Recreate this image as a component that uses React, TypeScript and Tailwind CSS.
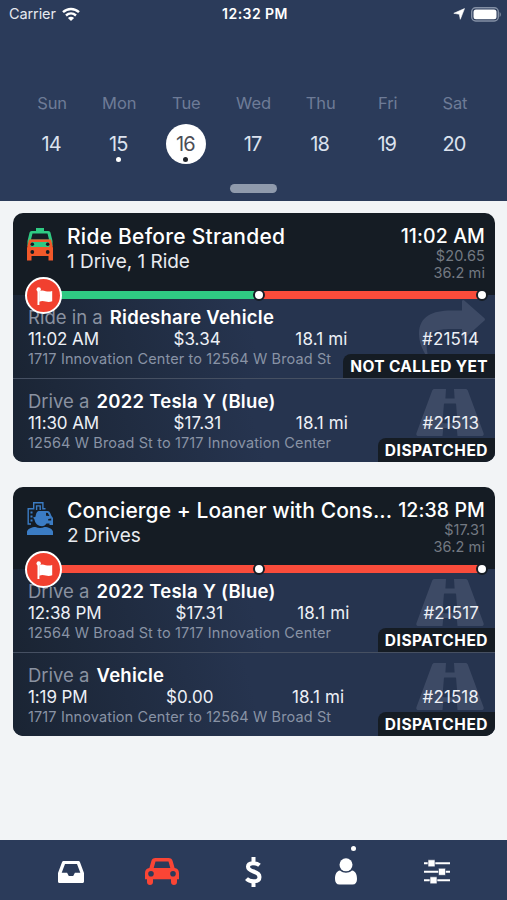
import type { ReactNode } from "react";
import clsx from "clsx";

type Leg = {
  prefix: string;
  vehicle: string;
  time: string;
  price: string;
  distance: string;
  id: string;
  address: string;
  status: string;
  kind: "ride" | "drive";
};

type Trip = {
  title: string;
  titleClass: string;
  subtitle: string;
  time: string;
  price: string;
  distance: string;
  icon: ReactNode;
  firstLeg: string;
  legs: Leg[];
};

const days = [
  { name: "Sun", date: 14 },
  { name: "Mon", date: 15, dot: true },
  { name: "Tue", date: 16, dot: true, selected: true },
  { name: "Wed", date: 17 },
  { name: "Thu", date: 18 },
  { name: "Fri", date: 19 },
  { name: "Sat", date: 20 },
];

const trips: Trip[] = [
  {
    title: "Ride Before Stranded",
    titleClass: "tracking-[0.25px]",
    subtitle: "1 Drive, 1 Ride",
    time: "11:02 AM",
    price: "$20.65",
    distance: "36.2 mi",
    icon: <TaxiIcon />,
    firstLeg: "bg-[#2fca83]",
    legs: [
      {
        prefix: "Ride in a",
        vehicle: "Rideshare Vehicle",
        time: "11:02 AM",
        price: "$3.34",
        distance: "18.1 mi",
        id: "#21514",
        address: "1717 Innovation Center to 12564 W Broad St",
        status: "NOT CALLED YET",
        kind: "ride",
      },
      {
        prefix: "Drive a",
        vehicle: "2022 Tesla Y (Blue)",
        time: "11:30 AM",
        price: "$17.31",
        distance: "18.1 mi",
        id: "#21513",
        address: "12564 W Broad St to 1717 Innovation Center",
        status: "DISPATCHED",
        kind: "drive",
      },
    ],
  },
  {
    title: "Concierge + Loaner with Cons...",
    titleClass: "tracking-[0.06px]",
    subtitle: "2 Drives",
    time: "12:38 PM",
    price: "$17.31",
    distance: "36.2 mi",
    icon: <ConciergeIcon />,
    firstLeg: "bg-[#f94c3b]",
    legs: [
      {
        prefix: "Drive a",
        vehicle: "2022 Tesla Y (Blue)",
        time: "12:38 PM",
        price: "$17.31",
        distance: "18.1 mi",
        id: "#21517",
        address: "12564 W Broad St to 1717 Innovation Center",
        status: "DISPATCHED",
        kind: "drive",
      },
      {
        prefix: "Drive a",
        vehicle: "Vehicle",
        time: "1:19 PM",
        price: "$0.00",
        distance: "18.1 mi",
        id: "#21518",
        address: "1717 Innovation Center to 12564 W Broad St",
        status: "DISPATCHED",
        kind: "drive",
      },
    ],
  },
];

function TaxiIcon() {
  return (
    <svg viewBox="0 0 26 33" className="h-[33px] w-[26px]">
      <path
        fill="#2fca83"
        fillRule="evenodd"
        d="M9 0h8v3h4.200c1.300 0 2 .7 2.300 1.800L25.500 13v5H.5v-5l2-8.200C2.800 3.700 3.500 3 4.800 3H9zM5.500 5.500 4 11.500h18l-1.500-6z"
      />
      <path fill="#f2592a" d="M2 11.500h22l2 8.500v12.500h-4.500V28h-17v4.500H0V20z" />
      <path fill="#2fca83" d="M4.500 14h17l1 5h-19z" />
      <g fill="#151c24">
        <circle cx="5.300" cy="16.200" r="1.800" />
        <circle cx="20.700" cy="16.200" r="1.800" />
        <circle cx="5.300" cy="24" r="1.900" />
        <circle cx="20.700" cy="24" r="1.900" />
      </g>
    </svg>
  );
}

function ConciergeIcon() {
  return (
    <svg viewBox="0 0 26 33" className="h-[33px] w-[26px]">
      <path
        fill="none"
        stroke="#3b7cc4"
        strokeWidth="1.400"
        d="M4 22H1.200V6.700h5.500V.8h9.200v5.900h2.600M9.600 8V3.900h3.600V8"
      />
      <path fill="#3b7cc4" d="M3.500 9.500h2v2h-2zM3.500 13.500h2v2h-2zM3.500 17.500h2v2h-2z" />
      <path
        fill="#3b7cc4"
        d="M11.500 9h9c1.300 0 2.200.7 2.700 2l1.300 3 1.500 2v7h-3.500v-1.500h-3C18.500 23.500 16 24.500 13.500 24 10.500 23.500 8 21 7.500 17.500L6 15.500l2.500-.8C9 12 9.500 9.500 11.500 9z"
      />
      <path fill="#151c24" d="m19 10.800 1.900.1 1.500 3.200-3.400-.4zM21.200 17l3-.5v2h-3z" />
      <path fill="#3b7cc4" d="M0 33v-3.500C1 26.500 5 25 8.500 25c2.500 1.200 6.500 1.200 9 0 4 0 7.500 1.500 8.500 4.500V33z" />
    </svg>
  );
}

function FlagIcon() {
  return (
    <svg viewBox="-10 -10 20 20" className="h-5 w-5" fill="white">
      <circle cx="-5.300" cy="-6.600" r="2.200" />
      <path d="M-6.500-6h1.900V9h-1.900z" />
      <path d="M-4.800-4.800c2.400-1 4.300-.6 6.500 0 2.200.6 4.200.5 6.500-.3v10.300c-2.300.9-4.300.9-6.500.3-2.200-.6-4.100-.8-6.500.2z" />
    </svg>
  );
}

function ShareMark() {
  return (
    <svg viewBox="0 0 66 57" className="h-[57px] w-[66px]" fill="currentColor">
      <path d="M43 1.500c0-1.500 1.200-2 2.300-1L65.200 18c1 .9 1 1.900 0 2.800L45.300 38.500c-1.100 1-2.300.4-2.300-1V29H32C18 29 8 32 7.500 44c-.1 4 .5 8 1.500 12 .2 1-1 1.300-1.500.4C3 49 0 41.500 0 34 0 16 14 10.500 32 10.500h11z" />
    </svg>
  );
}

function RoadMark() {
  return (
    <svg viewBox="0 0 68 47" className="h-[47px] w-[68px]" fill="currentColor">
      <path
        fillRule="evenodd"
        d="M18.500 0H30l-.6 9.500h9.200L38 0h11.500c1.200 0 1.800.5 2.300 1.600L67.500 44c.6 1.800 0 3-2 3H41.500l-.8-8H27.300l-.8 8H2.500c-2 0-2.600-1.200-2-3L16.200 1.600C16.700.5 17.300 0 18.500 0zM28.900 14.500c-.6 0-1 .4-1 1L26.500 33c0 .7.400 1.200 1 1.200h13c.6 0 1-.5 1-1.200l-1.400-17.500c0-.6-.4-1-1-1z"
      />
    </svg>
  );
}

function StatusBar() {
  return (
    <div className="grid h-7 grid-cols-3 items-center pr-[6px] pl-[9px] text-white">
      <div className="flex items-center gap-[6px]">
        <span className="text-[14.500px] leading-7 tracking-[-0.1px] text-[#e6e9ef]">Carrier</span>
        <svg viewBox="0 0 18 14" className="h-[14px] w-[18px]" fill="none" stroke="white" strokeWidth="2.400">
          <path d="M1 5.200C5.500.9 12.500.9 17 5.200M4 8.500c3-2.700 7-2.700 10 0" />
          <path fill="white" stroke="none" d="M9 14 5.900 10.900c1.800-1.600 4.400-1.600 6.200 0z" />
        </svg>
      </div>
      <span className="text-center text-[14px] leading-7 font-semibold tracking-[0.45px] whitespace-nowrap">
        12:32 PM
      </span>
      <div className="flex items-center justify-end gap-[6px]">
        <svg viewBox="0 0 12 12" className="h-3 w-3" fill="white" stroke="white" strokeWidth=".6">
          <path d="M11.500.6 7.300 11.300 6.300 6.200.8 5.300z" />
        </svg>
        <svg viewBox="0 0 30 15" className="h-[15px] w-[30px]">
          <rect x=".7" y=".8" width="26.600" height="13.200" rx="4" fill="none" stroke="#8490a5" strokeWidth="1.400" />
          <rect x="2.500" y="2.600" width="23" height="9.600" rx="2.500" fill="white" />
          <path d="M28.600 5v5c1.600-.8 1.600-4.200 0-5z" fill="#8490a5" />
        </svg>
      </div>
    </div>
  );
}

function Calendar() {
  return (
    <div className="flex flex-1 flex-col items-center">
      <div className="mt-[65px] grid w-[470px] grid-cols-7">
        {days.map((day) => (
          <div key={day.name} className="flex flex-col items-center">
            <span className="text-[16.500px] leading-5 tracking-[-0.1px] text-[#6e7b97]">{day.name}</span>
            <div
              className={clsx(
                "relative mt-[11px] flex h-10 w-10 items-center justify-center rounded-full pr-[2px] text-[20px] tracking-[-1px]",
                day.selected ? "bg-white text-[#4c4d55]" : "text-[#dce2ee]"
              )}
            >
              {day.date}
              {day.dot && (
                <span
                  className={clsx(
                    "absolute bottom-[2px] h-[5px] w-[5px] rounded-full",
                    day.selected ? "bg-[#22252b]" : "bg-white"
                  )}
                />
              )}
            </div>
          </div>
        ))}
      </div>
      <div className="mt-5 h-[9px] w-[47px] rounded-full bg-[#8f9aac]" />
    </div>
  );
}

function LegRow({ leg }: { leg: Leg }) {
  return (
    <div className="relative h-[83px] bg-linear-[75deg] from-[#1a2433] to-[#26344f] to-50% pt-[11px] pr-4 pl-[15px]">
      <div className={clsx("absolute text-[#3d4a65]", leg.kind === "ride" ? "top-[5px] right-[10px]" : "top-[10px] right-[11px]")}>
        {leg.kind === "ride" ? <ShareMark /> : <RoadMark />}
      </div>
      <div className="relative flex gap-[7px] text-[18.500px] leading-[22px] whitespace-nowrap">
        <span className="text-[#8a92a1]">{leg.prefix}</span>
        <span className="font-semibold tracking-[0.25px] text-white">{leg.vehicle}</span>
      </div>
      <div className="relative flex justify-between text-[17px] leading-[23px] tracking-[0.1px] text-[#edf0f6]">
        <span className="tracking-[-0.1px]">{leg.time}</span>
        <span>{leg.price}</span>
        <span className="tracking-[0.15px]">{leg.distance}</span>
        <span>{leg.id}</span>
      </div>
      <p className="relative text-[14.500px] leading-4 tracking-[0.12px] whitespace-nowrap text-[#8993a5]">
        {leg.address}
      </p>
      <span
        className={clsx(
          "absolute right-0 bottom-0 h-6 rounded-tl-lg bg-[#151c24] px-[7px] text-[15.500px] leading-[25px] font-bold text-white",
          leg.kind === "ride" ? "tracking-[0.35px]" : "tracking-[0.5px]"
        )}
      >
        {leg.status}
      </span>
    </div>
  );
}

function TripCard({ trip }: { trip: Trip }) {
  return (
    <section className="h-[249px] overflow-hidden rounded-[10px] bg-[#151c24]">
      <div className="relative z-10 flex h-[82px] pt-3 pr-[10px] pl-[14px]">
        <div className="mt-[3px] w-10">{trip.icon}</div>
        <div className="flex-1 whitespace-nowrap text-white">
          <h2 className={clsx("text-[21px] leading-6 font-[550]", trip.titleClass)}>{trip.title}</h2>
          <p className="text-[19px] leading-[26px] tracking-[-0.05px] text-[#e8ebf0]">{trip.subtitle}</p>
        </div>
        <div className="flex flex-col items-end text-right whitespace-nowrap">
          <span className="text-[19.500px] leading-[22px] font-[550] tracking-[0.1px] text-white">{trip.time}</span>
          <span className="text-[14.500px] leading-[17px] tracking-[0.1px] text-[#737982]">{trip.price}</span>
          <span className="text-[14.500px] leading-[18px] tracking-[0.1px] text-[#737982]">{trip.distance}</span>
        </div>

        <div className="absolute bottom-[-4px] left-[30px] flex h-[8px] w-[438px]">
          <div className={clsx("w-[216px]", trip.firstLeg)} />
          <div className="flex-1 bg-[#f94c3b]" />
        </div>
        <div className="absolute bottom-[-6px] left-[240px] h-3 w-3 rounded-full border-2 border-[#151c24] bg-white" />
        <div className="absolute right-[7px] bottom-[-6px] h-3 w-3 rounded-full border-2 border-[#151c24] bg-white" />
        <div className="absolute bottom-[-19px] left-3 flex h-[37px] w-[37px] items-center justify-center rounded-full border-2 border-white bg-[#f1402f]">
          <FlagIcon />
        </div>
      </div>
      <div className="divide-y divide-[#465062]">
        {trip.legs.map((leg) => (
          <div key={leg.id}>
            <LegRow leg={leg} />
          </div>
        ))}
      </div>
    </section>
  );
}

function TabBar() {
  return (
    <nav className="flex h-[60px] items-center bg-[#2b3b5a] pt-[3px] pl-[25px] text-white">
      <div className="flex w-[91px] justify-center">
        <svg viewBox="0 0 26 22" className="h-[22px] w-[26px]" fill="white">
          <path
            fillRule="evenodd"
            d="M6 0h14c1 0 1.700.5 2.100 1.400L26 12v8.500c0 .9-.6 1.500-1.500 1.500h-23C.6 22 0 21.400 0 20.500V12L3.900 1.400C4.300.5 5 0 6 0zm1 3L3.700 11.700h5.400l1.700 3.300h4.400l1.700-3.300h5.400L19 3z"
          />
        </svg>
      </div>
      <div className="flex w-[91px] justify-center">
        <svg viewBox="0 0 34 27" className="h-[27px] w-[34px]" fill="#fa4535">
          <path
            fillRule="evenodd"
            d="M10.500 0h13c2.300 0 3.600 1 4.200 3.300L29.600 10c2.700.3 4.400 2.300 4.400 5v6.300h-2V24c0 1.800-1.200 3-3 3s-3-1.200-3-3v-2.700H8V24c0 1.800-1.200 3-3 3s-3-1.200-3-3v-2.700H0V15c0-2.700 1.700-4.700 4.400-5l1.900-6.700C6.900 1 8.200 0 10.500 0zm0 3.500L8.700 10h16.600l-1.800-6.500zM6 13a2.800 2.800 0 1 0 0 5.600A2.800 2.800 0 0 0 6 13zm22 0a2.800 2.800 0 1 0 0 5.600 2.800 2.800 0 0 0 0-5.600z"
          />
        </svg>
      </div>
      <div className="flex w-[93px] justify-center">
        <svg viewBox="0 0 17 30" className="h-[30px] w-[17px]" fill="none" stroke="white" strokeWidth="4">
          <path d="M8.500 0v5.500M8.500 24.500V30M14.500 8.300C11.500 5.700 3 4.700 3 9.700c0 5.800 11.500 3.800 11.500 10.200 0 5.700-9.500 5.500-13 1.700" />
        </svg>
      </div>
      <div className="relative flex w-[91px] justify-center">
        <svg viewBox="0 0 22 27" className="h-[27px] w-[22px]" fill="white">
          <circle cx="11" cy="6.800" r="6.500" />
          <path d="M5 12.600c3.500 2.900 8.500 2.900 12 0 3.500.5 5 4.100 5 8.400 0 3.500-1.500 5.500-4.500 5.500h-13C1.500 26.500 0 24.500 0 21c0-4.300 1.500-7.900 5-8.400z" />
        </svg>
        <span className="absolute top-[-12px] right-[35px] h-[5px] w-[5px] rounded-full bg-white" />
      </div>
      <div className="flex w-[91px] justify-center">
        <svg viewBox="0 0 26 25" className="h-[25px] w-[26px]" fill="white">
          <path d="M0 3.300h26v2H0zM0 11.800h26v2H0zM0 20.300h26v2H0z" />
          <path stroke="#2b3b5a" strokeWidth=".6" d="M4 .8h7v7H4zM14.500 9.300h7v7h-7zM6 17.800h7v7H6z" />
        </svg>
      </div>
    </nav>
  );
}

function App() {
  return (
    <div className="flex h-[900px] w-[507px] flex-col overflow-hidden bg-[#f2f4f6] font-['Inter',sans-serif]">
      <header className="flex h-[201px] flex-col bg-[#2b3b5a]">
        <StatusBar />
        <Calendar />
      </header>
      <main className="flex flex-1 flex-col gap-[25px] pt-3 pr-3 pl-[13px]">
        {trips.map((trip) => (
          <TripCard key={trip.title} trip={trip} />
        ))}
      </main>
      <TabBar />
    </div>
  );
}

export default App;
